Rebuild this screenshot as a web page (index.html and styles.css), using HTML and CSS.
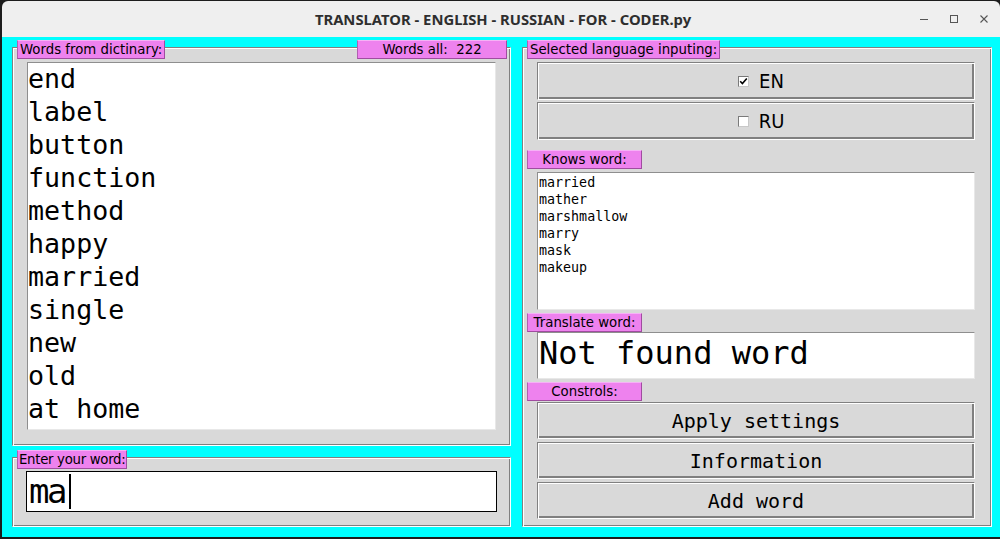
FILE: index.html
```html
<!DOCTYPE html>
<html>
<head>
<meta charset="utf-8">
<title>TRANSLATOR - ENGLISH - RUSSIAN - FOR - CODER.py</title>
<link rel="stylesheet" href="styles.css">
</head>
<body>
<div class="win">
  <header class="titlebar">
    <div class="title">TRANSLATOR - ENGLISH - RUSSIAN - FOR - CODER.py</div>
    <div class="wctl">
      <svg width="10" height="10" viewBox="0 0 10 10"><path d="M1 5.5h8" stroke="#555" stroke-width="1"/></svg>
      <svg width="10" height="10" viewBox="0 0 10 10"><rect x="1.5" y="1.5" width="7" height="7" fill="none" stroke="#555" stroke-width="1"/></svg>
      <svg width="10" height="10" viewBox="0 0 10 10"><path d="M1.5 1.5l7 7M8.5 1.5l-7 7" stroke="#555" stroke-width="1.1"/></svg>
    </div>
  </header>
  <main class="app">
    <div class="col-left">
      <section class="lf lf-dict">
        <span class="tag tag-dict">Words from dictinary:</span>
        <span class="tag tag-count">Words all:&nbsp; 222</span>
        <ul class="listbox biglist">
          <li>end</li>
          <li>label</li>
          <li>button</li>
          <li>function</li>
          <li>method</li>
          <li>happy</li>
          <li>married</li>
          <li>single</li>
          <li>new</li>
          <li>old</li>
          <li>at home</li>
        </ul>
      </section>
      <section class="lf lf-entry">
        <span class="tag tag-entry">Enter your word:</span>
        <div class="entry"><span class="entry-text">ma</span><span class="caret"></span></div>
      </section>
    </div>
    <section class="lf lf-right">
      <span class="tag tag-lang">Selected language inputing:</span>
      <div class="btn check-btn">
        <span class="cbox">
          <svg width="9" height="9" viewBox="0 0 9 9"><path d="M1.2 4.2l2.2 2.3 4.4-5" fill="none" stroke="#000" stroke-width="1.6"/></svg>
        </span>
        <span class="check-label">EN</span>
      </div>
      <div class="btn check-btn">
        <span class="cbox"></span>
        <span class="check-label">RU</span>
      </div>
      <span class="subtag subtag-knows">Knows word:</span>
      <ul class="listbox smalllist">
        <li>married</li>
        <li>mather</li>
        <li>marshmallow</li>
        <li>marry</li>
        <li>mask</li>
        <li>makeup</li>
      </ul>
      <span class="subtag subtag-tr">Translate word:</span>
      <div class="translate">Not found word</div>
      <span class="subtag subtag-ctl">Constrols:</span>
      <div class="btn cmd first">Apply settings</div>
      <div class="btn cmd">Information</div>
      <div class="btn cmd">Add word</div>
    </section>
  </main>
</div>
</body>
</html>
```

FILE: styles.css
```css
html, body {
  margin: 0;
  padding: 0;
}
body {
  background: #1c1c1c;
  width: 1000px;
  height: 539px;
  overflow: hidden;
}
.win {
  margin: 1px 0 0 2px;
  width: 998px;
  height: 536px;
  display: flex;
  flex-direction: column;
}
.titlebar {
  height: 36px;
  background: #efefef;
  border-top-left-radius: 6px;
  border-top-right-radius: 6px;
  display: flex;
  align-items: center;
  justify-content: center;
  position: relative;
}
.title {
  font-family: "Noto Sans", "DejaVu Sans", sans-serif;
  font-weight: 700;
  font-size: 14.8px;
  color: #2e2e2e;
  margin-left: 4px;
}
.wctl {
  position: absolute;
  right: 11px;
  top: 13px;
  display: flex;
  gap: 20px;
}
.wctl svg { display: block; }

.app {
  flex: 1;
  background: #00ffff;
  display: flex;
  padding: 10px 0 0 10px;
  gap: 11px;
  box-sizing: border-box;
}
.col-left {
  display: flex;
  flex-direction: column;
  gap: 11px;
}
.lf {
  position: relative;
  box-sizing: border-box;
  background: #d9d9d9;
  border: 1px solid;
  border-color: #808080 #ffffff #ffffff #808080;
  box-shadow: inset 1px 1px #ffffff, inset -1px -1px #808080;
}
.lf-dict {
  width: 499px;
  height: 399px;
  padding: 14px 0 0 14px;
}
.lf-entry {
  width: 499px;
  height: 70px;
  padding: 13px 0 0 13px;
}
.lf-right {
  width: 470px;
  height: 480px;
  padding: 14px 0 0 14px;
  display: flex;
  flex-direction: column;
  align-items: flex-start;
}

.tag, .subtag {
  box-sizing: border-box;
  height: 19px;
  background: #ee82ee;
  border: 1px solid;
  border-color: #f6b2f6 #a04ca0 #a04ca0 #b060b0;
  font-family: "DejaVu Sans", sans-serif;
  font-size: 13.3px;
  line-height: 17px;
  color: #000;
  white-space: nowrap;
}
.tag {
  position: absolute;
  top: -8px;
  left: 4px;
  padding: 0 2px 0 2px;
}
.tag-entry {
  padding: 0 1px;
  letter-spacing: -0.3px;
}
.tag-count {
  left: 344px;
  width: 150px;
  text-align: center;
}
.subtag {
  display: block;
  width: 115px;
  margin-left: -10px;
  text-align: center;
}
.subtag-knows { margin-top: 8px; }
.subtag-tr { margin-top: 3px; }
.subtag-ctl { margin-top: 3px; }

.listbox {
  list-style: none;
  margin: 0;
  box-sizing: border-box;
  background: #ffffff;
  border: 1px solid;
  border-color: #8e8e8e #e8e8e8 #e8e8e8 #8e8e8e;
  overflow: hidden;
  color: #000;
}
.biglist {
  width: 469px;
  height: 368px;
  padding: 0;
  font-family: "DejaVu Sans Mono", monospace;
  font-size: 26.67px;
  line-height: 33px;
}
.biglist li { margin-top: -1px; margin-bottom: 1px; }
.smalllist {
  width: 438px;
  height: 138px;
  margin-top: 3px;
  padding: 1px 0 0 1px;
  font-family: "DejaVu Sans Mono", monospace;
  font-size: 13.33px;
  line-height: 17px;
}
.listbox li { white-space: pre; }

.entry {
  box-sizing: border-box;
  width: 471px;
  height: 41px;
  background: #ffffff;
  border: 1px solid #000;
  display: flex;
  align-items: center;
  padding-left: 2px;
  overflow: hidden;
}
.entry-text {
  font-family: "DejaVu Sans Mono", monospace;
  font-size: 34px;
  letter-spacing: -2.5px;
  line-height: 35px;
  color: #000;
}
.caret {
  width: 2px;
  height: 35px;
  background: #000;
  margin-left: 4px;
}

.btn {
  box-sizing: border-box;
  width: 438px;
  background: #d9d9d9;
  border: 1px solid;
  border-color: #808080 #ffffff #ffffff #808080;
  box-shadow: inset 1px 1px #ffffff, inset -2px -2px #808080;
  display: flex;
  align-items: center;
  justify-content: center;
  color: #000;
}
.check-btn {
  height: 38px;
  margin-bottom: 2px;
  gap: 10px;
  padding-left: 10px;
}
.cbox {
  box-sizing: border-box;
  width: 11px;
  height: 11px;
  background: #fff;
  border: 1px solid;
  border-color: #7a7a7a #c8c8c8 #c8c8c8 #7a7a7a;
  display: flex;
  align-items: center;
  justify-content: center;
}
.cbox svg { display: block; }
.check-label {
  font-family: "DejaVu Sans Condensed", "DejaVu Sans", sans-serif;
  font-stretch: condensed;
  font-size: 20px;
  line-height: 24px;
}
.translate {
  box-sizing: border-box;
  width: 438px;
  height: 47px;
  background: #fff;
  border: 1px solid;
  border-color: #8e8e8e #e8e8e8 #e8e8e8 #8e8e8e;
  padding: 2px 0 0 1px;
  font-family: "DejaVu Sans Mono", monospace;
  font-size: 32px;
  line-height: 37px;
  color: #000;
  white-space: pre;
}
.cmd {
  height: 37px;
  margin-top: 3px;
  font-family: "DejaVu Sans Mono", monospace;
  font-size: 20px;
  white-space: pre;
}
.cmd.first { margin-top: 1px; }
```
